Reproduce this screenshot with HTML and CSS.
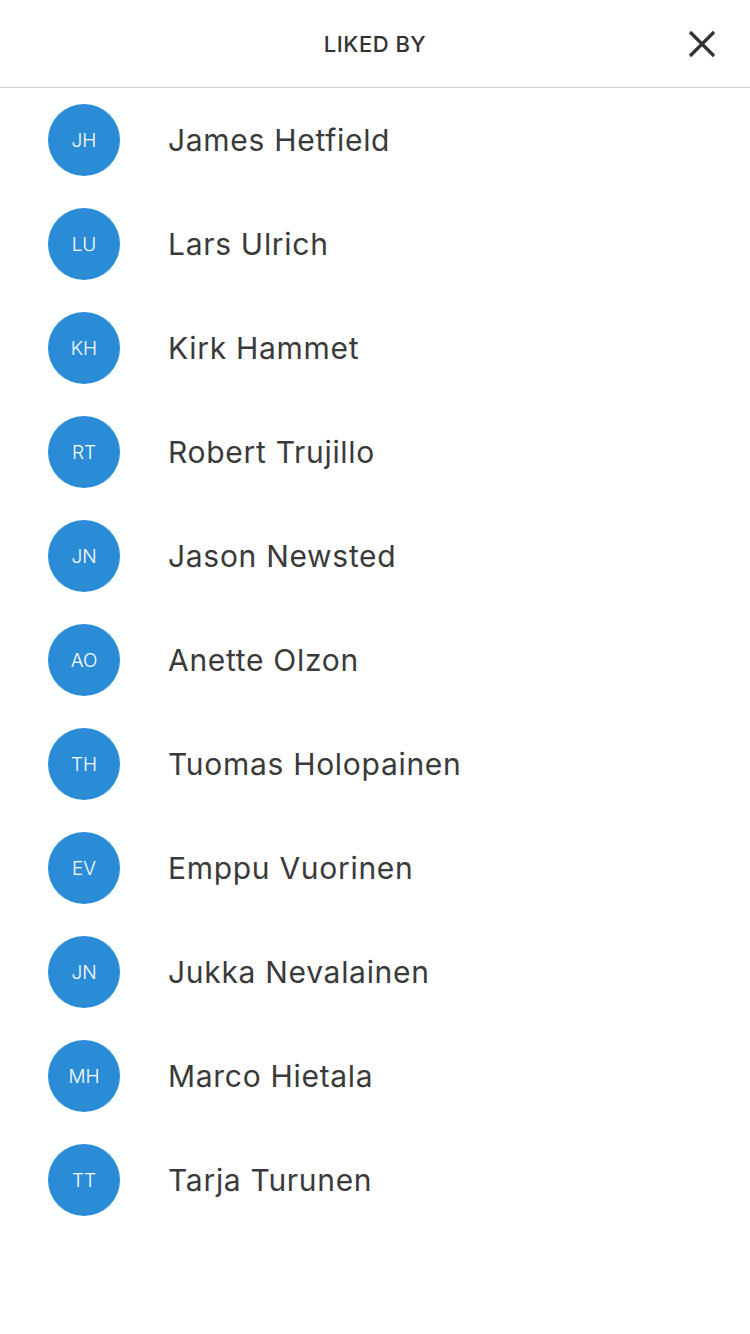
FILE: index.html
```html
<!DOCTYPE html>
<html>
<head>
<meta charset="utf-8">
<link rel="stylesheet" href="styles.css">
</head>
<body>
<div class="screen">
  <header class="header">
    <div class="title">LIKED BY</div>
    <button class="close" aria-label="Close">
      <svg width="30" height="30" viewBox="0 0 30 30"><path d="M3 3 L27 27 M27 3 L3 27" stroke="#333" stroke-width="3.2" stroke-linecap="butt" fill="none"/></svg>
    </button>
  </header>
  <ul class="list">
    <li class="row"><span class="avatar">JH</span><span class="name">James Hetfield</span></li>
    <li class="row"><span class="avatar">LU</span><span class="name">Lars Ulrich</span></li>
    <li class="row"><span class="avatar">KH</span><span class="name">Kirk Hammet</span></li>
    <li class="row"><span class="avatar">RT</span><span class="name">Robert Trujillo</span></li>
    <li class="row"><span class="avatar">JN</span><span class="name">Jason Newsted</span></li>
    <li class="row"><span class="avatar">AO</span><span class="name">Anette Olzon</span></li>
    <li class="row"><span class="avatar">TH</span><span class="name">Tuomas Holopainen</span></li>
    <li class="row"><span class="avatar">EV</span><span class="name">Emppu Vuorinen</span></li>
    <li class="row"><span class="avatar">JN</span><span class="name">Jukka Nevalainen</span></li>
    <li class="row"><span class="avatar">MH</span><span class="name">Marco Hietala</span></li>
    <li class="row"><span class="avatar">TT</span><span class="name">Tarja Turunen</span></li>
  </ul>
</div>
</body>
</html>
```
FILE: styles.css
```css
* { box-sizing: border-box; }
html, body { margin: 0; padding: 0; background: #fff; }
body { font-family: Inter, "Noto Sans", sans-serif; color: #333; }
.screen { width: 750px; height: 1334px; }
.header {
  height: 88px;
  border-bottom: 1px solid #cfcfcf;
  display: flex;
  align-items: center;
  justify-content: center;
  position: relative;
}
.title { font-size: 22px; font-weight: 500; letter-spacing: 0.5px; color: #333; }
.close {
  position: absolute;
  right: 33px;
  top: 29px;
  width: 30px;
  height: 30px;
  padding: 0;
  border: 0;
  background: none;
  display: flex;
}
.list { list-style: none; margin: 0; padding: 0; }
.row {
  height: 104px;
  display: flex;
  align-items: center;
  padding-left: 48px;
}
.avatar {
  width: 72px;
  height: 72px;
  border-radius: 50%;
  background: #2a8cd6;
  color: #fff;
  display: flex;
  align-items: center;
  justify-content: center;
  font-size: 19px;
  font-weight: 300;
  flex: none;
}
.name { margin-left: 48px; font-size: 30px; font-weight: 400; letter-spacing: 0.7px; color: #3a3a3a; }
```
